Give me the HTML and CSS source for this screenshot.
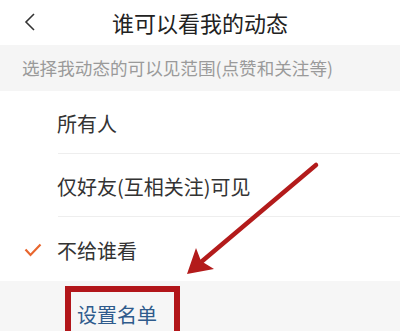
FILE: index.html
```html
<!DOCTYPE html>
<html lang="zh-CN">
<head>
    <meta charset="UTF-8">
    <meta name="viewport" content="width=device-width, initial-scale=1.0">
    <title>谁可以看我的动态</title>
    <link rel="stylesheet" href="styles.css">
</head>
<body>

<div class="page">
    <!-- Top bar -->
    <div class="topbar">
        <svg class="back" viewBox="0 0 12 18" width="12" height="18">
            <path d="M10 1 L2 9 L10 17" fill="none" stroke="#333" stroke-width="1.6"/>
        </svg>
        <div class="title">谁可以看我的动态</div>
    </div>

    <div class="hint">选择我动态的可以见范围(点赞和关注等)</div>

    <!-- Options -->
    <div class="options">
        <div class="option">
            <span class="check"></span>
            <span class="label">所有人</span>
        </div>
        <div class="option">
            <span class="check"></span>
            <span class="label">仅好友(互相关注)可见</span>
        </div>
        <div class="option last">
            <span class="check">
                <svg viewBox="0 0 18 14" width="18" height="14">
                    <path d="M1.5 6.5 L6.5 12 L16.5 1.5" fill="none" stroke="#e8662e" stroke-width="2.2"/>
                </svg>
            </span>
            <span class="label">不给谁看</span>
        </div>
    </div>

    <div class="sub">
        <span class="sub-link">设置名单</span>
        <div class="marker"></div>
    </div>

    <!-- Annotation arrow -->
    <svg class="arrow" viewBox="0 0 400 331" width="400" height="331">
        <line x1="316" y1="165" x2="194" y2="268" stroke="#b31b1b" stroke-width="4.5" stroke-linecap="round"/>
        <path d="M187 274 L196 248 L201 261 L214 269 Z" fill="#b31b1b"/>
    </svg>
</div>

</body>
</html>
```

FILE: styles.css
```css
body {
    margin: 0;
    font-family: "Noto Sans CJK SC", "Noto Sans", sans-serif;
    background-color: white;
}

.page {
    position: relative;
    width: 400px;
    height: 331px;
    overflow: hidden;
}

.topbar {
    position: relative;
    height: 45px;
    display: flex;
    align-items: center;
    justify-content: center;
}

.back {
    position: absolute;
    left: 24px;
    top: 13px;
}

.title {
    font-size: 22px;
    color: #222;
    line-height: 45px;
}

.hint {
    height: 46px;
    line-height: 46px;
    padding-left: 22px;
    background-color: #f5f5f5;
    color: #9a9a9a;
    font-size: 17.6px;
}

.option {
    display: flex;
    align-items: center;
    height: 61px;
    padding-top: 2px;
}

.option:not(.last) {
    background-image: linear-gradient(#eeeeee, #eeeeee);
    background-size: calc(100% - 58px) 1px;
    background-position: 58px 100%;
    background-repeat: no-repeat;
}

.option.last {
    height: 62px;
}

.check {
    flex: none;
    width: 57px;
    padding-left: 24px;
    box-sizing: border-box;
    display: flex;
    align-items: center;
}

.label {
    font-size: 20px;
    color: #333;
}

.sub {
    position: relative;
    height: 53px;
    background-color: #f6f6f6;
    padding-left: 77px;
    padding-top: 19px;
    box-sizing: border-box;
}

.sub-link {
    font-size: 20px;
    color: #2f5b8c;
}

.marker {
    position: absolute;
    left: 65px;
    top: 5px;
    width: 103px;
    height: 60px;
    border: 6px solid #b2161a;
}

.arrow {
    position: absolute;
    left: 0;
    top: 0;
    pointer-events: none;
}
```
